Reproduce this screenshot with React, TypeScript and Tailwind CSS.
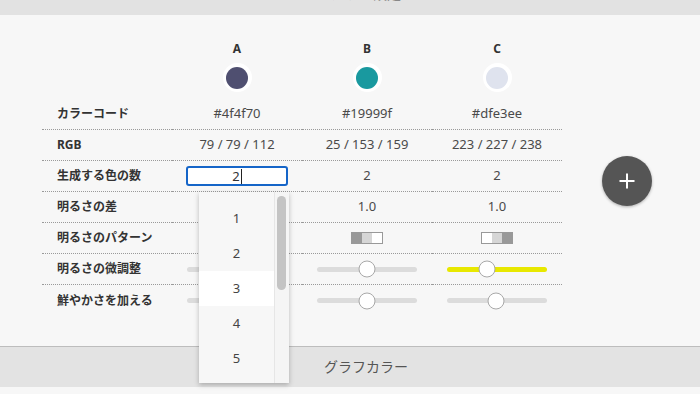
import React from "react";

const font = "font-['Noto_Sans','Noto_Sans_CJK_JP',sans-serif]";

function Slider({ pos, yellow }: { pos: number; yellow?: boolean }) {
  return (
    <div className="flex h-full items-center justify-center">
      <div
        className={
          "relative h-[5px] w-[100px] rounded-full " +
          (yellow ? "bg-[#e8e800]" : "bg-[#dcdcdc]")
        }
      >
        <div
          className="absolute top-1/2 h-[17px] w-[17px] -translate-x-1/2 -translate-y-1/2 rounded-full border border-[#a8a8a8] bg-white"
          style={{ left: pos }}
        />
      </div>
    </div>
  );
}

function Pattern({ rev }: { rev?: boolean }) {
  const segs = rev
    ? ["bg-white", "bg-[#d6d6d6]", "bg-[#999]"]
    : ["bg-[#999]", "bg-[#d6d6d6]", "bg-white"];
  return (
    <div className="flex h-full items-center justify-center">
      <div className="flex h-[12px] w-[32px] border border-[#999]">
        <div className={"flex-1 " + segs[0]} />
        <div className={"flex-1 " + segs[1]} />
        <div className={"flex-1 " + segs[2]} />
      </div>
    </div>
  );
}

const cell =
  "h-[31px] border-b border-dotted border-[#9a9a9a] flex items-center justify-center text-[13px] text-[#4a4a4a]";
const labelCell =
  "h-[31px] border-b border-dotted border-[#9a9a9a] flex items-center pl-[15px] text-[12px] font-bold text-[#333]";
const lastCell = "h-[31px] flex items-center justify-center";
const lastLabel = "h-[31px] flex items-center pl-[15px] text-[12px] font-bold text-[#333]";

export default function App() {
  return (
    <div className={"relative h-[394px] w-[700px] overflow-hidden bg-[#f7f7f7] " + font}>
      {/* top bar */}
      <div className="flex h-[15px] justify-center overflow-hidden bg-[#e2e2e2] pl-[32px]">
        <div className="-mt-[16px] text-[14px] leading-[20px] text-[#888]">カラー設定</div>
      </div>

      {/* main */}
      <div className="flex h-[331px] items-start pl-[42px] pt-[26px]">
        <div className="grid w-[520px] grid-cols-[130px_130px_130px_130px]">
          {/* header letters */}
          <div />
          {["A", "B", "C"].map((l) => (
            <div key={l} className="flex h-[16px] items-center justify-center text-[12px] font-bold text-[#333]">
              {l}
            </div>
          ))}
          {/* circles */}
          <div />
          {["bg-[#4f4f70]", "bg-[#19999f]", "bg-[#dfe3ee]"].map((c) => (
            <div key={c} className="flex h-[42px] items-start justify-center pt-[6px]">
              <div className="flex h-[29px] w-[29px] items-center justify-center rounded-full bg-white">
                <div className={"h-[22px] w-[22px] rounded-full " + c} />
              </div>
            </div>
          ))}

          {/* row 1 */}
          <div className={labelCell}>カラーコード</div>
          <div className={cell}>#4f4f70</div>
          <div className={cell}>#19999f</div>
          <div className={cell}>#dfe3ee</div>

          {/* row 2 */}
          <div className={labelCell}>RGB</div>
          <div className={cell}>79 / 79 / 112</div>
          <div className={cell}>25 / 153 / 159</div>
          <div className={cell}>223 / 227 / 238</div>

          {/* row 3 */}
          <div className={labelCell}>生成する色の数</div>
          <div className={cell}>
            <div className="flex h-[20px] w-[102px] items-center justify-center rounded-[3px] border-2 border-[#1565c8] bg-white">
              <span className="text-[13px] leading-none text-[#333]">2</span>
              <span className="ml-[1px] h-[15px] w-[1px] bg-[#222]" />
            </div>
          </div>
          <div className={cell}>2</div>
          <div className={cell}>2</div>

          {/* row 4 */}
          <div className={labelCell}>明るさの差</div>
          <div className={cell}>1.0</div>
          <div className={cell}>1.0</div>
          <div className={cell}>1.0</div>

          {/* row 5 */}
          <div className={labelCell}>明るさのパターン</div>
          <div className={cell}>
            <Pattern />
          </div>
          <div className={cell}>
            <Pattern />
          </div>
          <div className={cell}>
            <Pattern rev />
          </div>

          {/* row 6 */}
          <div className={labelCell}>明るさの微調整</div>
          <div className={cell}>
            <Slider pos={50} />
          </div>
          <div className={cell}>
            <Slider pos={50} />
          </div>
          <div className={cell}>
            <Slider pos={40} yellow />
          </div>

          {/* row 7 */}
          <div className={lastLabel}>鮮やかさを加える</div>
          <div className={lastCell}>
            <Slider pos={50} />
          </div>
          <div className={lastCell}>
            <Slider pos={50} />
          </div>
          <div className={lastCell}>
            <Slider pos={49} />
          </div>
        </div>

        {/* FAB */}
        <button className="ml-[40px] mt-[115px] flex h-[50px] w-[50px] items-center justify-center rounded-full bg-[#555] shadow-[0_1px_3px_rgba(0,0,0,0.3)]">
          <svg width="16" height="16" viewBox="0 0 16 16">
            <path d="M8 0.5V15.5M0.5 8H15.5" stroke="white" strokeWidth="2" />
          </svg>
        </button>
      </div>

      {/* bottom bar */}
      <div className="flex h-[41px] items-center justify-center border-t border-[#bdbdbd] bg-[#e3e3e3] pl-[32px] pb-[1px]">
        <span className="text-[14px] text-[#555]">グラフカラー</span>
      </div>

      {/* dropdown */}
      <div className="absolute left-[199px] top-[192px] flex h-[191px] w-[90px] bg-[#f7f7f7] shadow-[0_2px_5px_rgba(0,0,0,0.25)]">
        <div className="flex w-[75px] flex-col pt-[9px]">
          {["1", "2", "3", "4", "5"].map((n) => (
            <div
              key={n}
              className={
                "flex h-[35px] items-center justify-center text-[13px] text-[#444] " +
                (n === "3" ? "bg-white" : "")
              }
            >
              {n}
            </div>
          ))}
        </div>
        <div className="w-[15px] border-l border-[#e6e6e6] bg-[#f5f5f5] pl-[2px] pt-[4px]">
          <div className="h-[94px] w-[9px] rounded-full bg-[#c4c4c4]" />
        </div>
      </div>
    </div>
  );
}
